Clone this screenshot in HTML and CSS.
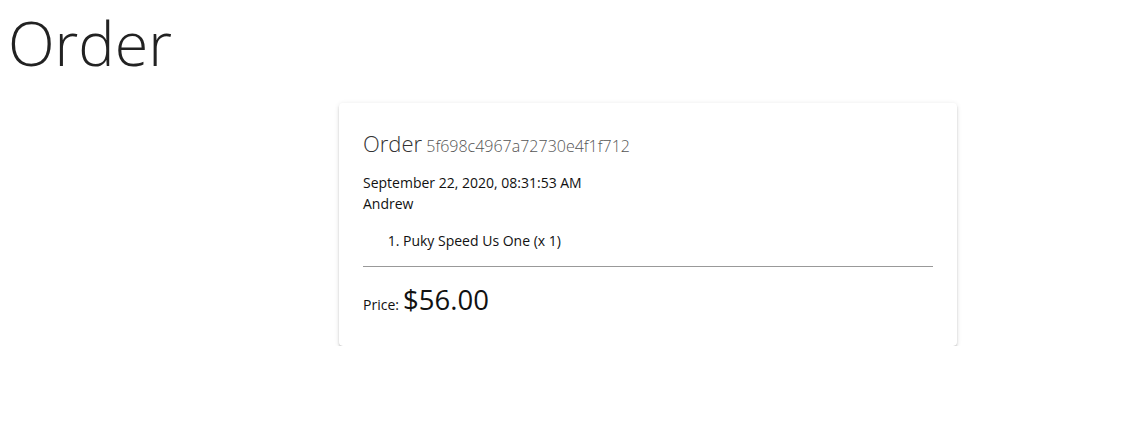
FILE: index.html
```html
<!DOCTYPE html>
<html>
<head>
<meta charset="utf-8">
<link rel="stylesheet" href="styles.css">
</head>
<body>
<h1 class="page-title">Order</h1>
<div class="wrap">
  <div class="card">
    <div class="card-title"><span class="t-main">Order</span> <span class="t-id">5f698c4967a72730e4f1f712</span></div>
    <div class="meta">
      <div>September 22, 2020, 08:31:53 AM</div>
      <div>Andrew</div>
    </div>
    <ol class="items">
      <li>Puky Speed Us One (x 1)</li>
    </ol>
    <hr class="divider">
    <div class="price"><span class="price-label">Price:</span> <span class="price-value">$56.00</span></div>
  </div>
</div>
</body>
</html>
```
FILE: styles.css
```css
body {
  margin: 8px;
  font-family: "Open Sans", "Noto Sans", sans-serif;
  color: rgba(0,0,0,0.87);
  background: #fff;
}
.page-title {
  margin: 0;
  font-size: 61px;
  font-weight: 300;
  line-height: 70px;
  color: #222;
}
.wrap {
  margin-top: 25px;
  padding-left: 331px;
}
.card {
  width: 570px;
  padding: 24px 24px 24px;
  border-radius: 4px;
  background: #fff;
  box-shadow: 0 3px 1px -2px rgba(0,0,0,0.22), 0 2px 2px 0 rgba(0,0,0,0.16), 0 1px 5px 0 rgba(0,0,0,0.12);
}
.card-title {
  line-height: 32px;
}
.t-main {
  font-size: 22px;
  font-weight: 300;
  color: #333;
}
.t-id {
  font-size: 16px;
  font-weight: 300;
  color: #555;
}
.meta {
  margin-top: 10px;
  font-size: 14px;
  line-height: 21px;
  color: #111;
}
.items {
  margin: 16px 0 0;
  padding-left: 40px;
  font-size: 14px;
  line-height: 21px;
  color: #111;
}
.divider {
  margin: 15px 0 0;
  border: 0;
  border-top: 1px solid #999;
}
.price {
  margin-top: 16px;
  line-height: 34px;
  color: #111;
}
.price-label {
  font-size: 14px;
}
.price-value {
  font-size: 27.5px;
}
```
